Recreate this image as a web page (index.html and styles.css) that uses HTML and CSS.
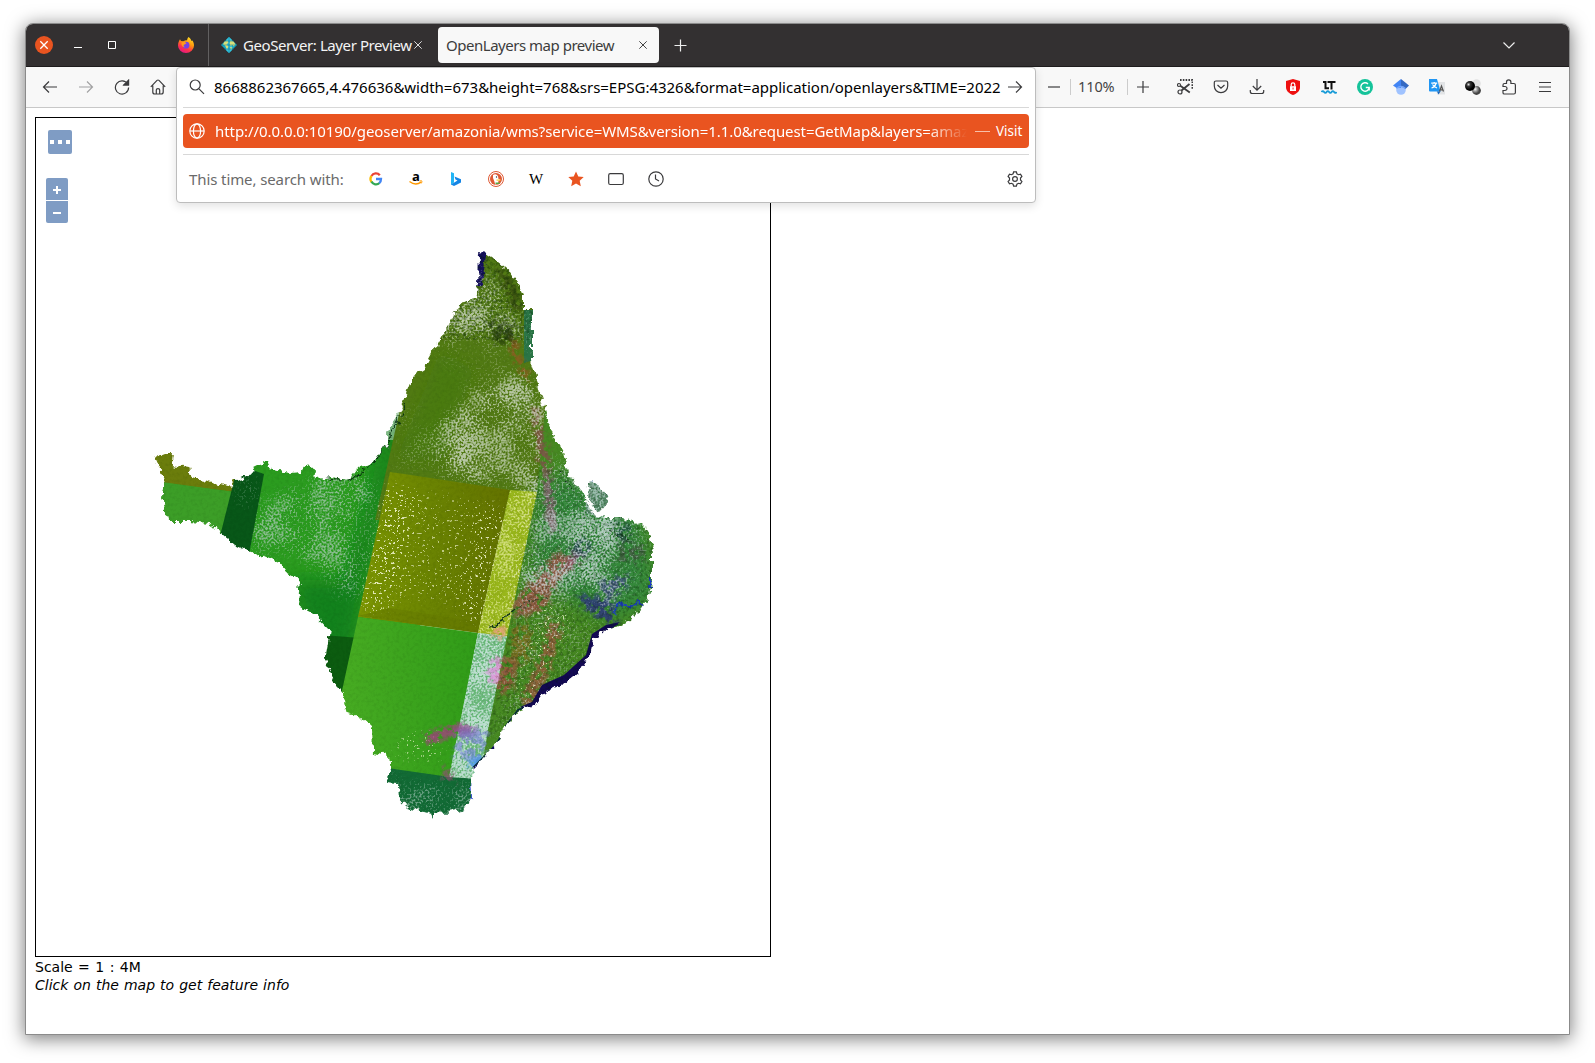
FILE: index.html
```html
<!DOCTYPE html>
<html lang="en">
<head>
<meta charset="utf-8">
<title>OpenLayers map preview</title>
<link rel="stylesheet" href="styles.css">
</head>
<body>
<div class="window">
  <header class="titlebar">
    <div class="controls">
      <svg class="ctl-close" width="18" height="18" viewBox="0 0 18 18"><circle cx="9" cy="9" r="9" fill="#e95420"/><path d="M5.3 5.3l7.4 7.4M12.7 5.3l-7.4 7.4" stroke="#fff" stroke-width="1.3"/></svg>
      <svg class="ctl-min" width="8" height="10" viewBox="0 0 8 10"><path d="M0 7.500h8" stroke="#fff"/></svg>
      <svg class="ctl-max" width="8" height="8" viewBox="0 0 8 8"><path d="M.5.5h7v7h-7z" fill="none" stroke="#fff"/></svg>
      <svg class="ctl-fox" width="16" height="16" viewBox="0 0 16 16">
        <defs><linearGradient id="fox" x1=".8" y1="0" x2=".3" y2="1"><stop offset="0" stop-color="#ffe226"/><stop offset=".4" stop-color="#ff980e"/><stop offset=".7" stop-color="#ff3647"/><stop offset="1" stop-color="#e31587"/></linearGradient></defs>
        <path d="M10.500 0c2 1 2.500 3 3 4l1-.5C15.500 5 16 7 16 8.500A8 7.500 0 0 1 0 8.500C0 6 .8 4 2 2.200L3 4l2.500.2C7 3.500 8 3 9 3.500c.2-1.500.7-2.500 1.500-3.500z" fill="url(#fox)"/>
        <circle cx="8" cy="8.200" r="3.400" fill="#7542e5"/><path d="M3.500 5.500c2-1.500 4-.5 5 .8L6.500 7.500C5 8 5.500 10 7 10c-2 1-4-1.500-3.500-4.500z" fill="#ff9a1a"/></svg>
    </div>
    <div class="tab tab-idle">
      <svg width="16" height="16" viewBox="0 0 16 16"><path d="M8 0l8 8-8 8-8-8z" fill="#14a5c4"/><path d="M8 0l3 3v10l-3 3-3-3V3z" fill="#35c3dc"/><path d="M3.500 4.500l3-1 1 2-2 2 2 2-1.500 3-2-4-2-1zM9.500 3.500l3 1 2 3-2 2-1-1.500-2 1-1-2.500zM9 10l2.500.5L10 13z" fill="#d8e07a"/><path d="M0 8h16M8 0v16M3 4h10M3 12h10" stroke="#0a7391" stroke-width=".5"/></svg>
      <span class="tab-title t-geo">GeoServer: Layer Preview</span>
      <svg class="x" width="8" height="8" viewBox="0 0 8 8"><path d="M.3.3l7.400 7.400M7.700.3L.3 7.700" stroke="#ddd" fill="none"/></svg>
    </div>
    <div class="tab tab-active">
      <span class="tab-title t-ol">OpenLayers map preview</span>
      <svg class="x" width="8" height="8" viewBox="0 0 8 8"><path d="M.3.3l7.400 7.400M7.700.3L.3 7.700" stroke="#444" fill="none"/></svg>
    </div>
    <svg class="newtab" width="13" height="13" viewBox="0 0 13 13"><path d="M6.500.5v12M.5 6.500h12" stroke="#eee" stroke-width="1.200"/></svg>
    <svg class="alltabs" width="12" height="7" viewBox="0 0 12 7"><path d="M.5.5L6 6 11.500.5" stroke="#eee" stroke-width="1.200" fill="none"/></svg>
  </header>

  <nav class="toolbar">
    <div class="group nav-left">
      <svg class="ic" viewBox="0 0 16 16"><path d="M15 8H1.500M7 2.500L1.500 8 7 13.500"/></svg>
      <svg class="ic dim" viewBox="0 0 16 16"><path d="M1 8h13.500M9 2.500L14.500 8 9 13.500"/></svg>
      <svg class="ic" viewBox="0 0 16 16"><path d="M13.600 5A6.600 6.600 0 1 0 14.600 8.500M14.500 1.500V6H10z"/><path d="M14.500 1.500V6H10z" fill="#3b3b3d"/></svg>
      <svg class="ic" viewBox="0 0 16 16"><path d="M.8 7.800L7 1.400q1-.8 2 0l6.200 6.400M2.800 6.500V13q0 2 2 2h6.400q2 0 2-2V6.500M6.300 15v-4q0-1.300 1.700-1.300T9.700 11v4"/></svg>
    </div>
    <div class="group nav-right">
      <svg class="ic zo" viewBox="0 0 16 16"><path d="M2 8h12"/></svg>
      <span class="zoom-level">110%</span>
      <svg class="ic zi" viewBox="0 0 16 16"><path d="M2 8h12M8 2v12"/></svg>
      <svg class="ic" viewBox="0 0 16 16"><path d="M3 1h12.500v10" stroke-dasharray="1.600 1.200" stroke-width="2"/><circle cx="2" cy="6" r="1.500"/><circle cx="3" cy="13" r="2"/><path d="M3.300 6.800l9.500 6.700M4.500 11.500L12.500 5" stroke-width="1.800"/></svg>
      <svg class="ic" viewBox="0 0 16 16"><path d="M3 2h10q1.700 0 1.700 1.700V7a6.700 6.700 0 0 1-13.400 0V3.700Q1.300 2 3 2zM4.500 6L8 9.300 11.500 6"/></svg>
      <svg class="ic" viewBox="0 0 16 16"><path d="M8 0v11M3.800 7L8 11.200 12.200 7M1.300 11v1.500q0 2 2 2h9.400q2 0 2-2V11"/></svg>
      <svg class="ic fillic" viewBox="0 0 16 16"><path d="M8 0l7 2v6c0 4-3 6.500-7 8-4-1.500-7-4-7-8V2z" fill="#ee1010"/><path d="M5 7.200h6V12H5z" fill="#fff"/><path d="M6.200 7.500V5.600a1.800 1.800 0 0 1 3.600 0v1.900" fill="none" stroke="#fff" stroke-width="1.200"/><path d="M7.600 8.500h.9v2h-.9z" fill="#e11"/></svg>
      <svg class="ic fillic" viewBox="0 0 16 16"><path d="M2 3h2.500v6.200h3.500M6.500 3h8M10.500 3v7.500" fill="none" stroke="#111" stroke-width="2"/><path d="M.5 13q1.300-1.800 2.600 0t2.500 0 2.500 0 2.500 0 2.500 0 2.400 0" fill="none" stroke="#179bd7" stroke-width="1.900"/></svg>
      <svg class="ic fillic" viewBox="0 0 16 16"><circle cx="8" cy="8" r="8" fill="#15c39a"/><path d="M11 5a4.200 4.200 0 1 0 1.200 3.500H8.800M12.200 8.500v3" fill="none" stroke="#fff" stroke-width="1.400"/></svg>
      <svg class="ic fillic" viewBox="0 0 16 16"><circle cx="8" cy="11" r="4.800" fill="#a0c3ff"/><path d="M0 6.500L8 0v9L3.500 9z" fill="#4285f4"/><path d="M16 6.500L8 0v7l4.500 3z" fill="#356ac3"/><path d="M3.500 9.500q4.500-4 9 0" fill="none" stroke="#76a7fa"/></svg>
      <svg class="ic fillic" viewBox="0 0 16 16"><path d="M6 3h10v12.500H8z" fill="#e2e4e6"/><path d="M0 0h8l3.500 12.500H1Q0 12.500 0 11.500z" fill="#2196f3"/><path d="M8 12.500h3.500L9.500 15.500z" fill="#1565c0"/><path d="M2.200 4.200h6M5.200 3v1.200M7 4.500Q6 8 2.500 9M3.500 5.500Q5 8 8 9" stroke="#fff" fill="none"/><path d="M10.500 12.500l2-5.500 2 5.500M11.200 10.800h2.600" stroke="#555" fill="none" stroke-width="1.200"/></svg>
      <svg class="ic fillic" viewBox="0 0 16 16"><defs><radialGradient id="b1" cx=".35" cy=".35"><stop offset="0" stop-color="#ddd"/><stop offset=".4" stop-color="#333"/><stop offset="1" stop-color="#000"/></radialGradient><radialGradient id="b2" cx=".35" cy=".35"><stop offset="0" stop-color="#fff"/><stop offset=".5" stop-color="#999"/><stop offset="1" stop-color="#444"/></radialGradient></defs><circle cx="11.500" cy="4.500" r="4.300" fill="#e2e2e2"/><circle cx="11.500" cy="11.500" r="4.400" fill="url(#b2)"/><circle cx="5" cy="7" r="5" fill="url(#b1)"/></svg>
      <svg class="ic" viewBox="0 0 16 16"><path d="M5.500 4.500V3a2.200 2.200 0 0 1 4.400 0v1.500h3q1.500 0 1.500 1.500v7.500q0 1.500-1.500 1.500H3.300q-1.300 0-1.300-1.300V11.500h2a2 2 0 0 0 0-4H2V6q0-1.500 1.500-1.500z"/></svg>
      <svg class="ic" viewBox="0 0 16 16"><path d="M2 3.500h12M2 8h12M2 12.500h12"/></svg>
    </div>
  </nav>

  <section class="urlpopup">
    <div class="urlrow">
      <svg class="ic" viewBox="0 0 16 16"><circle cx="6.200" cy="6" r="5"/><path d="M10 9.800l5 5"/></svg>
      <span class="url">8668862367665,4.476636&amp;width=673&amp;height=768&amp;srs=EPSG:4326&amp;format=application/openlayers&amp;TIME=2022</span>
      <svg class="ic go" viewBox="0 0 16 16"><path d="M1 8h13.500M9 2.500L14.500 8 9 13.500"/></svg>
    </div>
    <div class="result">
      <svg class="ic" viewBox="0 0 16 16"><circle cx="8" cy="8" r="7.200"/><ellipse cx="8" cy="8" rx="3.600" ry="7.200"/><path d="M1 8h14"/></svg>
      <span class="suggest">http://0.0.0.0:10190/geoserver/amazonia/wms?service=WMS&amp;version=1.1.0&amp;request=GetMap&amp;layers=amaz</span>
      <span class="dash"></span>
      <span class="visit">Visit</span>
    </div>
    <div class="engines">
      <span class="with">This time, search with:</span>
      <svg width="16" height="16" viewBox="0 0 16 16" fill="none" stroke-width="2.300"><path d="M3.500 5A5 5 0 0 1 11.800 4.200" stroke="#ea4335"/><path d="M3.500 5a5.200 5.200 0 0 0 0 6" stroke="#fbbc05"/><path d="M3.500 10.500a5 5 0 0 0 8 1.500" stroke="#34a853"/><path d="M8 8h5q0 2.800-1.800 4.200" stroke="#4285f4"/></svg>
      <svg class="brand" width="16" height="16" viewBox="0 0 16 16"><text x="8" y="9.500" text-anchor="middle" class="amz">a</text><path d="M1.500 10.500q6 4.500 11.500.6" fill="none" stroke="#f90" stroke-width="1.400"/><path d="M11.500 10q2.500-.6 2.500.2t-.7 2.200" fill="none" stroke="#f90"/></svg>
      <svg width="16" height="16" viewBox="0 0 16 16"><path d="M3 1l3 1.200v9.300L3 14z" fill="#22b5f5"/><path d="M6.500 5.500l6.500 2.700v3.300L6 15l-3-1.500 4.500-2.800 2-1.200-2-1z" fill="#1585e5"/></svg>
      <svg width="16" height="16" viewBox="0 0 16 16"><circle cx="8" cy="8" r="7.500" fill="#fff" stroke="#de5833"/><circle cx="8" cy="8" r="6" fill="#de5833"/><path d="M5 4q3-2 5 1l.5 3 2 .8-2 1L10 13l-2.800.6Q6 9 5 7z" fill="#fff"/><path d="M8.500 8.500h4v1.200h-4z" fill="#fc3"/><circle cx="8.500" cy="6" r=".7" fill="#234"/><path d="M7.500 11.500h4v1.500h-4z" fill="#5a4"/></svg>
      <svg class="brand" width="16" height="16" viewBox="0 0 16 16"><text x="8" y="13" text-anchor="middle" class="wiki">W</text></svg>
      <svg width="16" height="16" viewBox="0 0 16 16"><path d="M8 .5l2.300 5 5.400.6-4 3.700 1.100 5.500L8 12.600l-4.800 2.700 1.100-5.500-4-3.700 5.400-.6z" fill="#e95420"/></svg>
      <svg class="ic" viewBox="0 0 16 16"><rect x=".7" y="2.700" width="14.600" height="10.800" rx="1.500"/></svg>
      <svg class="ic" viewBox="0 0 16 16"><circle cx="8" cy="8" r="7.200"/><path d="M7.500 3.500V8l3.500 2"/></svg>
      <svg class="ic gear" viewBox="0 0 16 16"><path d="M6.600.8h2.800l.5 2 1.600.9 2-.6 1.400 2.400-1.400 1.500v2l1.400 1.500-1.400 2.400-2-.6-1.600.9-.5 2H6.600l-.5-2-1.600-.9-2 .6L1.100 10.500 2.500 9V7L1.100 5.500l1.400-2.400 2 .6 1.600-.9z"/><circle cx="8" cy="8" r="2.400"/></svg>
    </div>
  </section>

  <main class="page">
    <div class="map">
      <svg class="scene" width="734" height="838" viewBox="36 118 734 838">
        <defs>
          <filter id="rough" x="-5%" y="-5%" width="110%" height="110%" color-interpolation-filters="sRGB"><feTurbulence type="fractalNoise" baseFrequency=".14" numOctaves="3" seed="4"/><feDisplacementMap in="SourceGraphic" scale="9" xChannelSelector="R" yChannelSelector="G"/></filter>
          <filter id="soft" x="-20%" y="-20%" width="140%" height="140%"><feGaussianBlur stdDeviation="9"/></filter>
          <!-- breaks soft blobs into pixel-sized cloud specks of varying density -->
          <filter id="speck" filterUnits="userSpaceOnUse" x="140" y="240" width="530" height="590" color-interpolation-filters="sRGB">
            <feTurbulence type="fractalNoise" baseFrequency=".5" numOctaves="2" seed="9"/>
            <feColorMatrix values="0 0 0 0 1 0 0 0 0 1 0 0 0 0 1 3 0 0 0 -1" result="fine"/>
            <feTurbulence type="fractalNoise" baseFrequency=".035" numOctaves="3" seed="31"/>
            <feColorMatrix values="0 0 0 0 1 0 0 0 0 1 0 0 0 0 1 2.500 0 0 0 -.75" result="broad"/>
            <feComposite in="fine" in2="broad" operator="arithmetic" k2=".68" k3=".32" result="n"/>
            <feGaussianBlur in="SourceGraphic" stdDeviation="10" result="s"/>
            <feComposite in="n" in2="s" operator="arithmetic" k2="2.400" k3="2.400" k4="-2.420" result="m"/>
            <feComposite in="s" in2="m" operator="in"/>
          </filter>
          <filter id="sparse" filterUnits="userSpaceOnUse" x="140" y="240" width="530" height="590" color-interpolation-filters="sRGB">
            <feTurbulence type="fractalNoise" baseFrequency=".4" numOctaves="2" seed="15"/>
            <feColorMatrix values="0 0 0 0 1 0 0 0 0 1 0 0 0 0 1 2.600 0 0 0 -.9" result="n"/>
            <feGaussianBlur in="SourceGraphic" stdDeviation="9" result="s"/>
            <feComposite in="n" in2="s" operator="arithmetic" k2="6" k3="3" k4="-6.900" result="m"/>
            <feComposite in="s" in2="m" operator="in"/>
          </filter>
          <filter id="patch" filterUnits="userSpaceOnUse" x="140" y="240" width="530" height="590" color-interpolation-filters="sRGB">
            <feTurbulence type="fractalNoise" baseFrequency=".16" numOctaves="4" seed="21"/>
            <feColorMatrix values="0 0 0 0 1 0 0 0 0 1 0 0 0 0 1 2.600 0 0 0 -.8" result="n"/>
            <feGaussianBlur in="SourceGraphic" stdDeviation="3.500" result="s"/>
            <feComposite in="n" in2="s" operator="arithmetic" k2="2.500" k3="2.500" k4="-2" result="m"/>
            <feComposite in="s" in2="m" operator="in"/>
          </filter>
          <filter id="grain" filterUnits="userSpaceOnUse" x="140" y="240" width="530" height="590" color-interpolation-filters="sRGB">
            <feTurbulence type="fractalNoise" baseFrequency=".3" numOctaves="3" seed="2"/>
            <feColorMatrix values="0 0 0 0 0 0 0 0 0 .12 0 0 0 0 0 2.400 0 0 0 -1.050" result="g"/>
            <feComposite in="g" in2="SourceGraphic" operator="in"/>
          </filter>
          <linearGradient id="mid"><stop offset="0" stop-color="#7c9602"/><stop offset=".5" stop-color="#6a8302"/><stop offset="1" stop-color="#637200"/></linearGradient>
          <linearGradient id="low"><stop offset="0" stop-color="#4bae24"/><stop offset="1" stop-color="#309c18"/></linearGradient>
          <clipPath id="center"><path d="M403 402L440 240H560L537 492 510 490 390 472z"/></clipPath>
          <clipPath id="east"><path d="M537 240h140v590H470l18-100z"/></clipPath>
          <clipPath id="west"><path d="M264 474l20-40H400L343 693 230 640 248 560z"/></clipPath>
          <clipPath id="stripA"><path d="M510 490L537 492 507 636 478 633z"/></clipPath>
          <clipPath id="stripB"><path d="M478 633L507 636 488 730 480 779 449 777z"/></clipPath>
          <mask id="land" maskUnits="userSpaceOnUse" x="140" y="240" width="530" height="590">
            <g fill="#fff" filter="url(#rough)">
              <path d="M479 253L486 254 498 262 510 272 518 284 523 296 523 312 527 309 532 309 532 363 536 375 539 390 546 415 554 437 563 453 568 472 583 496 596 516 608 518 623 518 642 525 650 535 652 553 652 583 648 599 640 609 632 620 617 627 607 629 594 638 590 654 582 669 563 684 543 693 535 705 518 711 505 727 497 743 483 759 473 769 471 778 472 797 463 810 447 813 434 812 434 820 430 813 418 810 407 807 399 798 398 784 387 783 390 771 388 755 373 752 372 728 360 717 348 713 343 694 332 677 325 660 330 631 312 612 298 605 300 580 287 573 280 563 264 556 248 551 235 545 222 534 208 523 190 521 168 521 162 497 165 480 155 457 165 453 173 453 172 465 189 468 192 478 205 480 232 487 235 480 248 477 255 468 267 462 270 468 290 473 302 472 307 465 317 470 315 479 333 477 348 482 357 470 373 463 387 443 387 433 400 412 407 390 412 377 423 370 442 335 450 322 462 303 475 297 478 283z"/>
              <path d="M586 482L593 480 600 488 605 494 608 503 600 512 593 507 588 500 589 491z"/>
            </g>
          </mask>
        </defs>
        <g mask="url(#land)">
          <path d="M140 440H420V720H140z" fill="#2b9c1f"/>
          <path d="M140 440h96v52l-74-9h-22z" fill="#6b7d0c"/>
          <path d="M140 482h22l72 10-14 50h-80z" fill="#3c9e27"/>
          <path d="M238 465L264 474 248 560 219 540z" fill="#085718"/>
          <path d="M385 420L410 400 375 540 350 670 310 640 290 580 345 580 368 500z" fill="#0c7b1c" filter="url(#soft)" opacity=".8"/>
          <path d="M310 634l50 4-16 60-34 0z" fill="#0c5c10"/>
          <path d="M401 405L440 240H590V520H375z" fill="#527a14"/>
          <path d="M440 350l35 20-30 90-50 0z" fill="#447c07" filter="url(#soft)" opacity=".6"/>
          <path d="M537 492L545 410 600 440 680 560 620 640 470 790z" fill="#478a22"/>
          <path d="M538 492L560 470 640 510 660 600 610 620 530 580z" fill="#34893a" filter="url(#soft)"/>
          <path d="M390 472L510 490 478 633 358 617z" fill="url(#mid)"/>
          <path d="M358 617L478 633 450 777 370 770 320 790 340 700z" fill="url(#low)"/>
          <path d="M510 490L537 492 507 636 478 633z" fill="#98b61a"/>
          <path d="M478 633L507 636 488 730 480 779 449 777z" fill="#68b878"/>
          <path d="M380 767L450 777 480 779V830H380z" fill="#126b35"/>
          <path d="M524 310h10v50l-10 3z" fill="#2b7646"/>
          <path d="M586 478h24v36h-24z" fill="#4f8560"/>
          <g filter="url(#patch)">
            <path d="M490 258l26 24 8 34-12-4-12-28z" fill="#384b10" opacity=".8"/>
            <path d="M508 334l10 2 2 18 14 28-12-4-12-22z" fill="#9a5524" opacity=".8"/>
            <path d="M530 405l9 0 13 55-2 16-13-10z" fill="#8a4a52" opacity=".75"/>
            <path d="M540 468l14 10 6 55-14 0z" fill="#93607a" opacity=".8"/>
            <path d="M556 550l18 8-28 52-28 10-8-16z" fill="#a0574a" opacity=".85"/>
            <path d="M570 550l16 8-22 18z" fill="#a0596c"/>
            <path d="M548 615l18 10-24 72-18 22-4-24 18-36z" fill="#a25540" opacity=".75"/>
            <path d="M498 656l22 4-8 34-20 0z" fill="#a05040" opacity=".8"/>
            <path d="M509 622l26 4-6 40-20-8z" fill="#8f6a22" opacity=".7"/>
            <path d="M438 764l16 6 2 16-14-6z" fill="#8c5070" opacity=".8"/>
            <path d="M580 592l36 10 2 24-16-2-26-20z" fill="#2e2c88" opacity=".75"/>
            <path d="M598 578l36-4-12 22-22 4z" fill="#423d92" opacity=".7"/>
            <path d="M565 540l25-4 5 20-20 4z" fill="#1a2a5a" opacity=".6"/>
            <path d="M606 520l28 4-2 16-20 4z" fill="#153a45" opacity=".6"/>
            <path d="M620 540l26 4 0 20-30 0z" fill="#4c4a4a" opacity=".6"/>
          </g>
          <path d="M478 250h9l-3 18-2 16-7 6z" fill="#15105e" filter="url(#rough)"/>
          <g clip-path="url(#center)"><g fill="#dfe6da" filter="url(#speck)">
            <path d="M484 265l16 15 24 35 0 22-84 0 0-35z" opacity=".66"/>
            <path d="M420 300l110 30 20 80-60 0-60-50z" opacity=".34"/>
            <path d="M465 395l65-25 32 50 0 90-130-35 10-50z" opacity=".62"/>
            <path d="M385 410l85-10 10 90-100-20z" opacity=".36"/>
          </g></g>
          <g filter="url(#patch)"><path d="M484 318l32 6 0 20-22 2z" fill="#22380a" opacity=".75"/></g>
          <g clip-path="url(#west)"><g fill="#cbd6dc" filter="url(#speck)">
            <path d="M306 472l36-10 40 10-14 120-22 20-20-35-45-20-45-4 0-34z" opacity=".58"/>
          </g></g>
          <g clip-path="url(#east)"><g fill="#d6e2e6" filter="url(#speck)">
            <path d="M535 460l30-10 35 60 30 12-34 60-90 14z" opacity=".62"/>
            <path d="M580 500l75 10 6 80-40 18-50-30z" opacity=".46"/>
            <path d="M515 560l110 20-30 90-50 60-60 40z" opacity=".44"/>
          </g></g>
          <g fill="#b5d0c8" filter="url(#speck)">
            <path d="M366 768l120 16-6 54-110-6z" opacity=".54"/>
            <path d="M580 472h36v48h-36z" opacity=".8"/>
            <path d="M240 464l26 10-8 40-26 0z" opacity=".45"/>
            <path d="M520 300h18v60h-18z" opacity=".7"/>
          </g>
          <g clip-path="url(#stripA)"><g fill="#f0f6b0" filter="url(#speck)"><path d="M490 460l70 10-38 184-66-8z" opacity=".62"/></g></g>
          <g clip-path="url(#stripB)"><g fill="#dff0f4" filter="url(#speck)"><path d="M460 610l76 6-42 184-70-8z" opacity=".72"/></g></g>
          <g fill="#fdffe0" filter="url(#sparse)">
            <path d="M380 478l36 6-26 136-36-6z" opacity=".85"/>
            <path d="M409 484l80 10-20 120-80-10z" opacity=".62"/>
            <path d="M484 500l28 4-28 128-26-6z" opacity=".85"/>
            <path d="M535 590l50 20-50 100-30 0z" opacity=".75"/>
            <path d="M395 725l60 0-10 45-60-8z" opacity=".65"/>
          </g>
          <path d="M390 608L478 622 476 632 358 616z" fill="#637800" opacity=".5"/>
          <g filter="url(#patch)">
            <path d="M422 734l36-12 20 4-6 10-24 2-20 10z" fill="#a33f80" opacity=".85"/>
            <path d="M490 656l14 2-4 26-16 0z" fill="#e48ae0" opacity=".75"/>
            <path d="M492 626l16 0-4 14-12-2z" fill="#eaa080"/>
            <path d="M458 728l34 0-8 34-32-4z" fill="#777de0" opacity=".6"/>
            <path d="M462 766l24-14-6 20z" fill="#4c9cf0"/>
          </g>
          <path d="M618 624L605 628 594 640 586 664 572 676 545 688 536 702 518 710 506 726 497 744 473 768" fill="none" stroke="#0a2e38" stroke-width="2"/>
          <path d="M620 622L606 625 592 634 586 655 564 675 542 685 532 702 520 707 534 710 550 700 569 690 588 674 598 656 600 638z" fill="#130953"/>
          <path d="M473 768l14-13 10-14-2 13-18 18z" fill="#100b60"/>
          <path d="M614 615l6-10 10 2 8-5 6 4M650 575v12M594 480l10 8 6 15M472 780v18" fill="none" stroke="#1d3fc0" stroke-width="2" filter="url(#rough)"/>
          <path d="M489 627l14-5 10-12" fill="none" stroke="#12341c" stroke-width="1.500" filter="url(#rough)"/>
          <path d="M513 610l18-10 18 0M560 470l14 20M610 530l20 10" fill="none" stroke="#12341c" stroke-dasharray="3 3" filter="url(#rough)"/>
          <path d="M318 476l18 3 14 2 24-18 14-22 18-38" fill="none" stroke="#092f12" filter="url(#rough)"/>
          <path d="M140 240h530v590H140z" filter="url(#grain)" opacity=".07"/>
          <path d="M538 470l30 0 90 50-4 90-70 60-50 50-50 20 26-110z" filter="url(#grain)" opacity=".3"/>
          <path d="M440 340V240h100v100z" filter="url(#grain)" opacity=".4"/>
        </g>
      </svg>
      <button class="olbtn options"><i></i><i></i><i></i></button>
      <div class="zoomctl"><span class="olbtn"><svg width="8" height="8" viewBox="0 0 8 8"><path d="M4 0v8M0 4h8" stroke="#fff" stroke-width="2"/></svg></span><span class="olbtn"><svg width="8" height="8" viewBox="0 0 8 8"><path d="M0 4h8" stroke="#fff" stroke-width="2"/></svg></span></div>
    </div>
    <div class="info scale">Scale = 1 : 4M</div>
    <div class="info hint">Click on the map to get feature info</div>
  </main>
</div>
</body>
</html>
```
FILE: styles.css
```css
* { box-sizing: border-box; }
body {
  margin: 0;
  width: 1595px;
  height: 1063px;
  padding: 23px 26px 28px 25px;
  background: #fff;
  font-family: "Noto Sans", sans-serif;
  overflow: hidden;
}
svg { display: block; flex: none; }
.window {
  position: relative;
  width: 1545px;
  height: 1012px;
  border: 1px solid #8b8b8b;
  border-radius: 8px 8px 0 0;
  background: #fff;
  box-shadow: 0 3px 18px 1px rgba(0, 0, 0, .5);
}
.titlebar {
  display: flex;
  align-items: center;
  height: 43px;
  background: #333031;
  border-bottom: 1px solid #1e1c1d;
  border-radius: 7px 7px 0 0;
}
.controls {
  display: flex;
  align-items: center;
  width: 183px;
  height: 42px;
  padding-left: 9px;
  border-right: 1px solid #626061;
}
.ctl-min { margin-left: 21px; }
.ctl-max { margin-left: 26px; }
.ctl-fox { margin-left: 62px; }
.tab { display: flex; align-items: center; font-size: 15px; white-space: nowrap; }
.tab-idle { width: 229px; padding-left: 12px; color: #f4f4f4; }
.tab-idle .tab-title { width: 171px; margin-left: 6px; }
.tab-active {
  width: 221px;
  height: 36px;
  padding-left: 8px;
  border-radius: 4px;
  background: #f8f8f8;
  color: #3d3d3d;
}
.tab-active .tab-title { width: 193px; }
.t-geo { letter-spacing: -.42px; }
.t-ol { letter-spacing: -.48px; }
.newtab { margin-left: 15px; }
.alltabs { margin-left: auto; margin-right: 54px; }
.toolbar {
  display: flex;
  justify-content: space-between;
  height: 41px;
  padding: 0 16px;
  background: #f8f8f8;
  border-bottom: 1px solid #c8c8c8;
}
.group { display: flex; align-items: center; gap: 20px; }
.ic { width: 16px; height: 16px; fill: none; stroke: #3b3b3d; stroke-width: 1.2; }
.fillic { stroke: none; }
.dim { opacity: .45; }
.zi { margin-right: 6px; }
.zoom-level {
  width: 58px;
  height: 16px;
  margin: 0 -13px 0 -12px;
  padding-left: 7px;
  border: solid #ccc;
  border-width: 0 1px;
  font-size: 14.5px;
  line-height: 15px;
  letter-spacing: -.1px;
  color: #444;
}
.urlpopup {
  position: absolute;
  left: 150px;
  top: 43px;
  width: 860px;
  height: 136px;
  padding: 0 6px;
  border: 1px solid #bdbdbd;
  border-radius: 4px;
  background: #fff;
  box-shadow: 0 3px 10px rgba(0, 0, 0, .12);
  z-index: 2;
}
.urlrow, .result, .engines { display: flex; align-items: center; white-space: nowrap; }
.urlrow { height: 40px; padding: 0 6px 1px; border-bottom: 1px solid #d8d8d8; }
.url { width: 786px; margin-left: 9px; font-size: 15px; letter-spacing: -.012px; color: #000; }
.go { margin-left: auto; }
.result {
  height: 34px;
  margin: 6px 0;
  padding: 0 6px;
  border-radius: 4px;
  background: #e95420;
  color: #fff;
  font-size: 15px;
}
.result .ic { stroke: #fff; }
.suggest {
  width: 752px;
  margin-left: 10px;
  letter-spacing: -.075px;
  -webkit-mask-image: linear-gradient(to left, transparent, #000 40px);
  mask-image: linear-gradient(to left, transparent, #000 40px);
}
.dash { width: 15px; height: 1px; margin-left: 8px; background: #f8bfa9; }
.visit { margin-left: 6px; font-size: 13.5px; }
.engines {
  height: 48px;
  padding: 0 6px;
  border-top: 1px solid #d8d8d8;
  gap: 24px;
}
.with { width: 155px; font-size: 15px; letter-spacing: -.1px; color: #6a6a6a; }
.gear { margin-left: auto; }
.brand { overflow: visible; }
.amz { font: bold 13px "Open Sans", sans-serif; }
.wiki { font: 15px "Liberation Serif", serif; }
.page { padding: 9px 9px 0; }
.map { position: relative; width: 736px; height: 840px; border: 1px solid #000; }
.olbtn {
  display: flex;
  align-items: center;
  justify-content: center;
  width: 22px;
  height: 22px;
  background: #7f9cc4;
}
.options {
  position: absolute;
  left: 12px;
  top: 12px;
  width: 24px;
  height: 24px;
  padding: 0;
  gap: 4px;
  border: 0;
  border-radius: 2px;
}
.options i { width: 4px; height: 4px; background: #fff; }
.zoomctl {
  position: absolute;
  left: 10px;
  top: 60px;
  display: grid;
  gap: 1px;
  border-radius: 2px;
  overflow: hidden;
}
.zoomctl .olbtn { padding-top: 2px; }
.info { font-family: "DejaVu Sans", sans-serif; font-size: 14px; line-height: 18px; color: #000; }
.scale { margin-top: 1px; word-spacing: 1px; }
.hint { font-style: italic; word-spacing: .6px; }
```
